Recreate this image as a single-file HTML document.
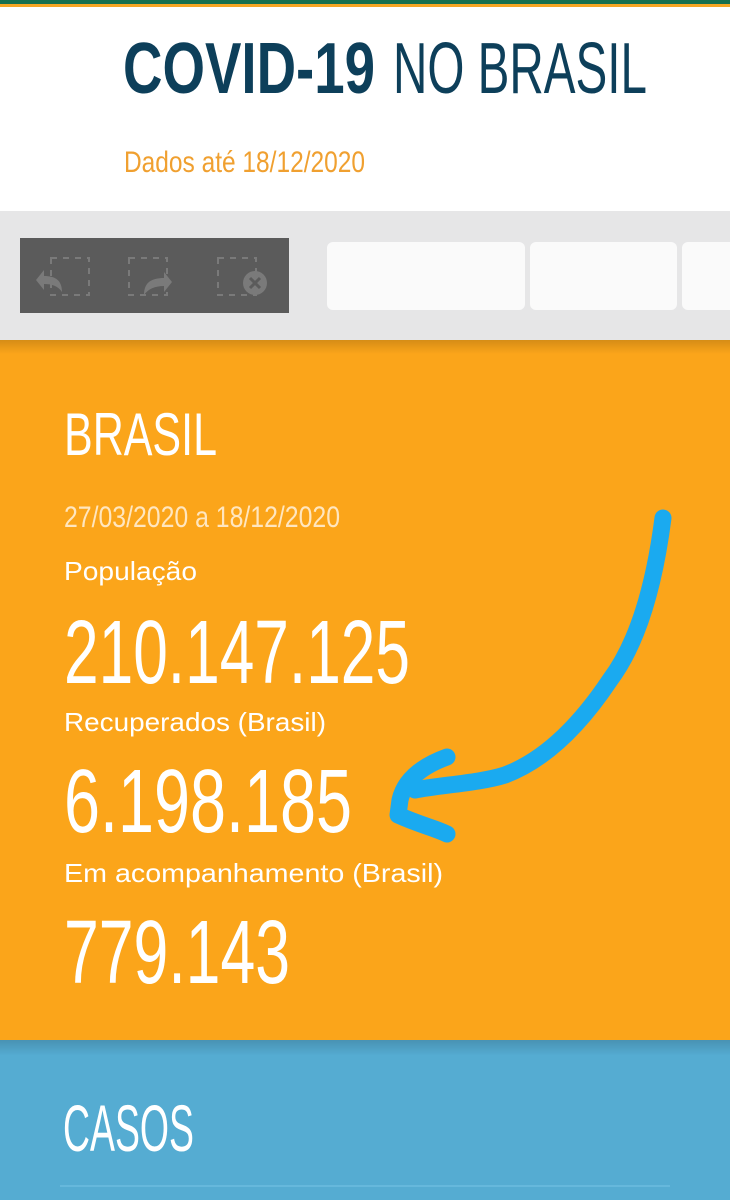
<!DOCTYPE html>
<html><head><meta charset="utf-8"><style>html,body{margin:0;padding:0;width:730px;height:1200px;overflow:hidden;background:#fff}svg{display:block}</style></head><body>
<svg width="730" height="1200" viewBox="0 0 730 1200" xmlns="http://www.w3.org/2000/svg" font-family="Liberation Sans, sans-serif">
<defs>
<linearGradient id="sh" x1="0" y1="0" x2="0" y2="1"><stop offset="0" stop-color="#000" stop-opacity="0.25"/><stop offset="1" stop-color="#000" stop-opacity="0"/></linearGradient>
</defs>
<rect x="0" y="0" width="730" height="4" fill="#17704f"/>
<rect x="0" y="4" width="730" height="3" fill="#f6a623"/>
<text x="123" y="93" font-size="72" font-weight="bold" fill="#0d3f5a" textLength="252" lengthAdjust="spacingAndGlyphs">COVID-19</text>
<text x="393" y="93" font-size="72" fill="#0d3f5a" textLength="254" lengthAdjust="spacingAndGlyphs">NO BRASIL</text>
<text x="124" y="172" font-size="30" fill="#f0a030" textLength="241" lengthAdjust="spacingAndGlyphs">Dados até 18/12/2020</text>
<rect x="0" y="211" width="730" height="131" fill="#e6e6e7"/>
<rect x="20" y="238" width="269" height="75" fill="#5b5b5b"/>
<g fill="none" stroke="#7a7a7a" stroke-width="2" stroke-dasharray="6,6">
<rect x="51" y="258" width="38" height="37"/><rect x="129" y="258" width="38" height="37"/><rect x="218" y="258" width="38" height="37"/>
</g>
<path d="M62 292 C62 280 55 276 44 276 L44 270 L36 280 L44 290 L44 284 C52 284 58 286 62 292Z" fill="#7a7a7a"/>
<path d="M144 295 C144 282 152 278 164 278 L164 272 L172 282 L164 292 L164 286 C155 286 148 289 144 295Z" fill="#7a7a7a"/>
<circle cx="255" cy="283" r="12" fill="#7a7a7a"/>
<path d="M250 278 L260 288 M260 278 L250 288" stroke="#5b5b5b" stroke-width="3"/>
<rect x="327" y="242" width="198" height="68" rx="6" fill="#fafafa"/>
<rect x="530" y="242" width="147" height="68" rx="6" fill="#fafafa"/>
<rect x="682" y="242" width="60" height="68" rx="6" fill="#fafafa"/>
<rect x="0" y="340" width="730" height="702" fill="#fba51a"/>
<rect x="0" y="340" width="730" height="14" fill="url(#sh)" opacity="0.6"/>
<text x="64" y="455" font-size="60" fill="#fff" textLength="153" lengthAdjust="spacingAndGlyphs">BRASIL</text>
<text x="64" y="527" font-size="30" fill="#ffe6bf" textLength="276" lengthAdjust="spacingAndGlyphs">27/03/2020 a 18/12/2020</text>
<text x="64" y="580" font-size="26" fill="#fff" textLength="133" lengthAdjust="spacingAndGlyphs">População</text>
<text x="64" y="683" font-size="90" fill="#fff" textLength="346" lengthAdjust="spacingAndGlyphs">210.147.125</text>
<text x="64" y="731" font-size="26" fill="#fff" textLength="262" lengthAdjust="spacingAndGlyphs">Recuperados (Brasil)</text>
<text x="64" y="832" font-size="90" fill="#fff" textLength="288" lengthAdjust="spacingAndGlyphs">6.198.185</text>
<text x="64" y="882" font-size="26" fill="#fff" textLength="379" lengthAdjust="spacingAndGlyphs">Em acompanhamento (Brasil)</text>
<text x="64" y="983" font-size="90" fill="#fff" textLength="226" lengthAdjust="spacingAndGlyphs">779.143</text>
<g fill="none" stroke="#1aaaf0" stroke-width="17" stroke-linecap="round" stroke-linejoin="round">
<path d="M663 518 C655 580 640 640 610 680 C580 725 545 760 505 775 C480 783 440 785 415 790"/>
<path d="M447 757 C425 765 405 778 400 800 L398 815 C420 825 435 828 447 834"/>
</g>
<rect x="0" y="1040" width="730" height="160" fill="#55acd2"/>
<rect x="0" y="1040" width="730" height="16" fill="url(#sh)" opacity="0.6"/>
<text x="63" y="1151" font-size="66" fill="#fff" textLength="131" lengthAdjust="spacingAndGlyphs">CASOS</text>
<rect x="60" y="1185" width="610" height="2" fill="#66b8dc"/>
</svg>
</body></html>
